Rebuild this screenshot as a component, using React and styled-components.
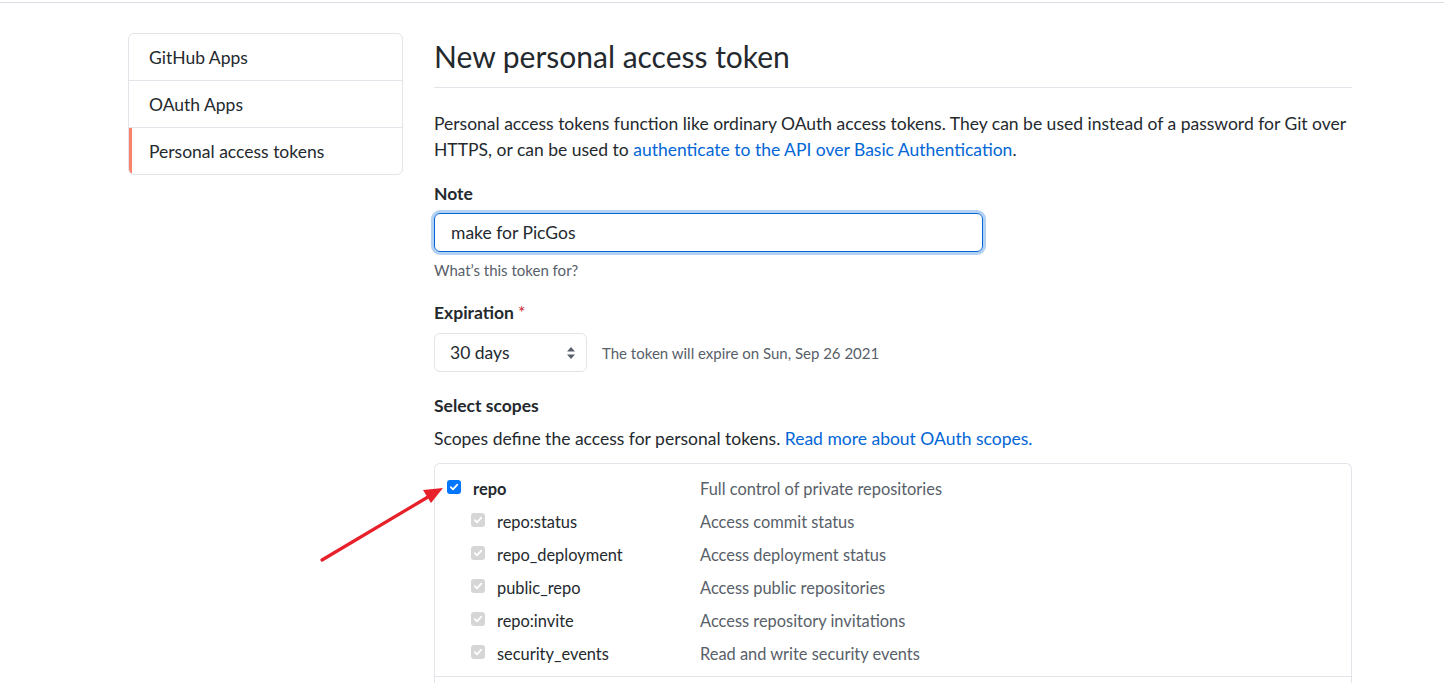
import styled, { createGlobalStyle } from 'styled-components'

const Global = createGlobalStyle`
    body {
        margin: 0;
        background: #fff;
        font-family: Lato, "Noto Sans", sans-serif;
        color: #24292e;
    }
`

const TopRule = styled.div`
    height: 2px;
    border-bottom: 1px solid #d8dee4;
`

const Layout = styled.div`
    position: relative;
    display: flex;
    align-items: flex-start;
    gap: 31px;
    padding-left: 128px;
`

const SideMenu = styled.nav`
    width: 273px;
    margin-top: 30px;
    border: 1px solid #e1e4e8;
    border-radius: 6px;
    overflow: hidden;
`

const MenuItem = styled.div`
    height: 46px;
    display: flex;
    align-items: center;
    padding-left: 20px;
    font-size: 17.5px;
    color: #24292e;
    border-bottom: ${p => (p.$last ? 'none' : '1px solid #e1e4e8')};
    box-shadow: ${p => (p.$active ? 'inset 3px 0 0 #f9826c' : 'none')};
`

const Main = styled.main`
    width: 918px;
`

const Title = styled.h1`
    margin: 31px 0 0;
    padding-bottom: 8px;
    font-size: 30px;
    line-height: 45px;
    font-weight: 400;
    border-bottom: 1px solid #e1e4e8;
`

const Lead = styled.p`
    margin: 23px 0 0;
    font-size: 17.5px;
    line-height: 26px;
`

const Link = styled.a`
    color: #0366d6;
    text-decoration: none;
`

const Label = styled.div`
    margin-top: ${p => p.$top}px;
    font-size: 17.5px;
    line-height: 26px;
    font-weight: 700;
`

const Required = styled.span`
    color: #cb2431;
    font-weight: 400;
    margin-left: 4px;
`

const TextInput = styled.div`
    margin-top: 6px;
    width: 549px;
    height: 39px;
    box-sizing: border-box;
    border: 1px solid #0366d6;
    border-radius: 6px;
    box-shadow: 0 0 0 3px rgba(3, 102, 214, 0.3);
    display: flex;
    align-items: center;
    padding-left: 16px;
    font-size: 17.5px;
`

const Hint = styled.div`
    margin-top: ${p => (p.$inline ? 0 : 8)}px;
    font-size: 15px;
    line-height: 20px;
    color: #586069;
`

const SelectRow = styled.div`
    margin-top: 7px;
    display: flex;
    align-items: center;
    gap: 15px;
`

const Select = styled.div`
    width: 153px;
    height: 39px;
    box-sizing: border-box;
    border: 1px solid #e1e4e8;
    border-radius: 6px;
    display: flex;
    align-items: center;
    justify-content: space-between;
    padding: 0 10px 0 15px;
    font-size: 17.5px;
`

const Plain = styled.p`
    margin: 7px 0 0;
    font-size: 17.5px;
    line-height: 26px;
`

const ScopeBox = styled.div`
    margin-top: 11px;
    border: 1px solid #e1e4e8;
    border-bottom: none;
    border-radius: 6px 6px 0 0;
    height: 240px;
`

const ScopeGroup = styled.div`
    padding: 8px 0 6px;
    border-bottom: 1px solid #e1e4e8;
`

const ScopeRow = styled.div`
    display: flex;
    align-items: center;
    height: 33px;
    padding-left: ${p => (p.$sub ? 36 : 12)}px;
`

const ScopeName = styled.div`
    display: flex;
    align-items: center;
    gap: 12px;
    width: ${p => (p.$sub ? 229 : 253)}px;
    font-size: 16.4px;
    font-weight: ${p => (p.$sub ? 400 : 700)};
    color: #24292e;
`

const ScopeDesc = styled.div`
    font-size: 16.4px;
    color: #586069;
`

const Box = styled.span`
    width: 14px;
    height: 14px;
    border-radius: 3px;
    background: ${p => (p.$disabled ? '#d6d6d6' : '#0075ff')};
    display: inline-flex;
    align-items: center;
    justify-content: center;
    margin-top: -3px;
    flex-shrink: 0;
`

const Arrow = styled.svg`
    position: absolute;
    left: 0;
    top: 0;
    pointer-events: none;
`

function Check({ disabled }) {
    return (
        <Box $disabled={disabled}>
            <svg width="10" height="10" viewBox="0 0 10 10">
                <path d="M1.8 5.2 L4 7.3 L8.3 2.6" fill="none" stroke="#fff" strokeWidth="1.8" strokeLinecap="round" strokeLinejoin="round" />
            </svg>
        </Box>
    )
}

const subs = [
    ['repo:status', 'Access commit status'],
    ['repo_deployment', 'Access deployment status'],
    ['public_repo', 'Access public repositories'],
    ['repo:invite', 'Access repository invitations'],
    ['security_events', 'Read and write security events'],
]

export default function App() {
    return (
        <>
            <Global />
            <TopRule />
            <Layout>
                <SideMenu>
                    <MenuItem>GitHub Apps</MenuItem>
                    <MenuItem>OAuth Apps</MenuItem>
                    <MenuItem $active $last>Personal access tokens</MenuItem>
                </SideMenu>

                <Main>
                    <Title>New personal access token</Title>
                    <Lead>
                        Personal access tokens function like ordinary OAuth access tokens. They can be used instead of a password for Git over
                        HTTPS, or can be used to <Link href="#">authenticate to the API over Basic Authentication</Link>.
                    </Lead>

                    <Label $top={18}>Note</Label>
                    <TextInput>make for PicGos</TextInput>
                    <Hint>What’s this token for?</Hint>

                    <Label $top={20}>Expiration<Required>*</Required></Label>
                    <SelectRow>
                        <Select>
                            30 days
                            <svg width="10" height="14" viewBox="0 0 10 14">
                                <path d="M5 1 L9 5.5 H1 Z M5 13 L9 8.5 H1 Z" fill="#586069" />
                            </svg>
                        </Select>
                        <Hint $inline>The token will expire on Sun, Sep 26 2021</Hint>
                    </SelectRow>

                    <Label $top={21}>Select scopes</Label>
                    <Plain>
                        Scopes define the access for personal tokens. <Link href="#">Read more about OAuth scopes.</Link>
                    </Plain>

                    <ScopeBox>
                        <ScopeGroup>
                            <ScopeRow>
                                <ScopeName><Check />repo</ScopeName>
                                <ScopeDesc>Full control of private repositories</ScopeDesc>
                            </ScopeRow>
                            {subs.map(([name, desc]) => (
                                <ScopeRow $sub key={name}>
                                    <ScopeName $sub><Check disabled />{name}</ScopeName>
                                    <ScopeDesc>{desc}</ScopeDesc>
                                </ScopeRow>
                            ))}
                        </ScopeGroup>
                    </ScopeBox>
                </Main>

                <Arrow width="460" height="600">
                    <line x1="322" y1="557" x2="428" y2="494" stroke="#e8202a" strokeWidth="3.2" strokeLinecap="round" />
                    <path d="M443 485 L423 487 L431 500 Z" fill="#e8202a" />
                </Arrow>
            </Layout>
        </>
    )
}
